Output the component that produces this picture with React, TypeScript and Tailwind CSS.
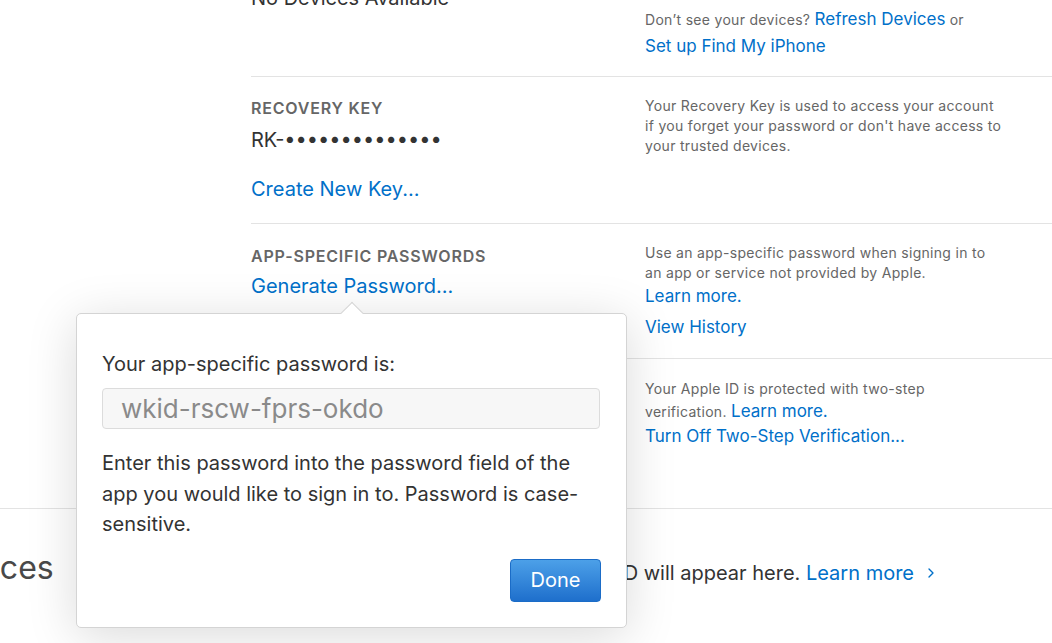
import { ChevronRight } from "lucide-react";

const link = "text-[#0070c9]";

function Row({
  left,
  right,
  border = true,
  className = "",
}: {
  left: React.ReactNode;
  right: React.ReactNode;
  border?: boolean;
  className?: string;
}) {
  return (
    <div className={`flex ${border ? "border-b border-[#e3e3e3]" : ""} ${className}`}>
      <div className="w-[394px] shrink-0">{left}</div>
      <div className="flex-1">{right}</div>
    </div>
  );
}

function Label({ children }: { children: React.ReactNode }) {
  return (
    <div className="text-[16px] leading-[20px] font-semibold uppercase tracking-[0.8px] text-[#666]">
      {children}
    </div>
  );
}

function PasswordPopover() {
  return (
    <div className="absolute left-[76px] top-[313px] w-[551px] rounded-[5px] border border-[#d4d4d4] bg-white px-[25px] pt-[38px] pb-[25px] shadow-[0_8px_50px_rgba(0,0,0,0.15)]">
      {/* arrow */}
      <div className="absolute left-[267px] -top-[9px] h-[16px] w-[16px] rotate-45 border-l border-t border-[#d4d4d4] bg-white" />
      <p className="text-[20px] leading-[24px] text-[#333]">Your app-specific password is:</p>
      <div className="mt-[12px] flex h-[41px] w-[498px] items-center rounded-[4px] border border-[#dcdcdc] bg-[#f7f7f7] pl-[18px] text-[26px] text-[#8a8a8a]">
        wkid-rscw-fprs-okdo
      </div>
      <p className="mt-[19px] w-[498px] text-[20px] leading-[30.5px] text-[#333]">
        Enter this password into the password field of the app you would like to sign in to. Password is case-sensitive.
      </p>
      <div className="mt-[19px] flex justify-end">
        <button className="h-[43px] w-[91px] rounded-[4px] border border-[#1b6cc7] bg-gradient-to-b from-[#4ca0e8] to-[#1e6fcc] text-[20px] text-white">
          Done
        </button>
      </div>
    </div>
  );
}

export default function App() {
  return (
    <div
      className="relative h-[643px] w-full overflow-hidden bg-white"
      style={{ fontFamily: "Inter, 'Liberation Sans', sans-serif" }}
    >
      <div className="-mt-[14px] pl-[251px]">
        {/* devices */}
        <Row
          className="h-[91px]"
          left={<div className="text-[20px] leading-[24px] text-[#333]">No Devices Available</div>}
          right={
            <div className="pt-[20px] text-[14px] leading-[27px] tracking-[0.3px] text-[#666]">
              Don’t see your devices? <span className={`${link} text-[17px] tracking-normal`}>Refresh Devices</span> or
              <div className={`${link} text-[17px] tracking-normal`}>Set up Find My iPhone</div>
            </div>
          }
        />

        {/* recovery key */}
        <Row
          className="h-[147px]"
          left={
            <div className="pt-[21px]">
              <Label>Recovery Key</Label>
              <div className="mt-[10px] text-[20px] leading-[24px] text-[#333]">
                RK-••••••••••••••
              </div>
              <div className={`mt-[25px] text-[20px] leading-[24px] ${link}`}>Create New Key...</div>
            </div>
          }
          right={
            <p className="w-[358px] pt-[19px] text-[14px] leading-[20px] tracking-[0.3px] text-[#666]">
              Your Recovery Key is used to access your account if you forget your password or don't have access to your trusted devices.
            </p>
          }
        />

        {/* app-specific passwords */}
        <Row
          className="h-[135px]"
          left={
            <div className="pt-[22px]">
              <Label>App-Specific Passwords</Label>
              <div className={`mt-[8px] text-[20px] leading-[24px] ${link}`}>Generate Password...</div>
            </div>
          }
          right={
            <div className="pt-[19px]">
              <p className="w-[358px] text-[14px] leading-[20px] tracking-[0.3px] text-[#666]">
                Use an app-specific password when signing in to an app or service not provided by Apple.
              </p>
              <div className={`mt-[1px] text-[17px] leading-[24px] ${link}`}>Learn more.</div>
              <div className={`mt-[7px] text-[17px] leading-[24px] ${link}`}>View History</div>
            </div>
          }
        />

        {/* two-step */}
        <Row
          border={false}
          className="h-[149px]"
          left={
            <div className="pt-[22px]">
              <Label>Two-Step Verification</Label>
              <div className="mt-[8px] text-[20px] leading-[24px] text-[#333]">On</div>
            </div>
          }
          right={
            <div className="pt-[18px]">
              <p className="w-[320px] text-[14px] leading-[23px] tracking-[0.3px] text-[#666]">
                Your Apple ID is protected with two-step verification.{" "}
                <span className={`${link} text-[17px] tracking-normal`}>Learn more.</span>
              </p>
              <div className={`mt-[1px] text-[17px] leading-[24px] ${link}`}>
                Turn Off Two-Step Verification...
              </div>
            </div>
          }
        />
      </div>

      {/* devices section */}
      <div className="flex items-start border-t border-[#e3e3e3] pt-[40px] pr-[113px]">
        <h2 className="-ml-[67px] text-[32px] leading-[38px] text-[#494949]">Devices</h2>
        <div className="ml-auto mt-[12px] flex items-center whitespace-nowrap text-[20px] leading-[24px] text-[#333]">
          Devices signed in with your Apple ID will appear here.&nbsp;
          <span className={link}>Learn more</span>
          <ChevronRight className="ml-[9px] h-[16px] w-[16px] text-[#0070c9]" strokeWidth={2} />
        </div>
      </div>

      <PasswordPopover />
    </div>
  );
}
